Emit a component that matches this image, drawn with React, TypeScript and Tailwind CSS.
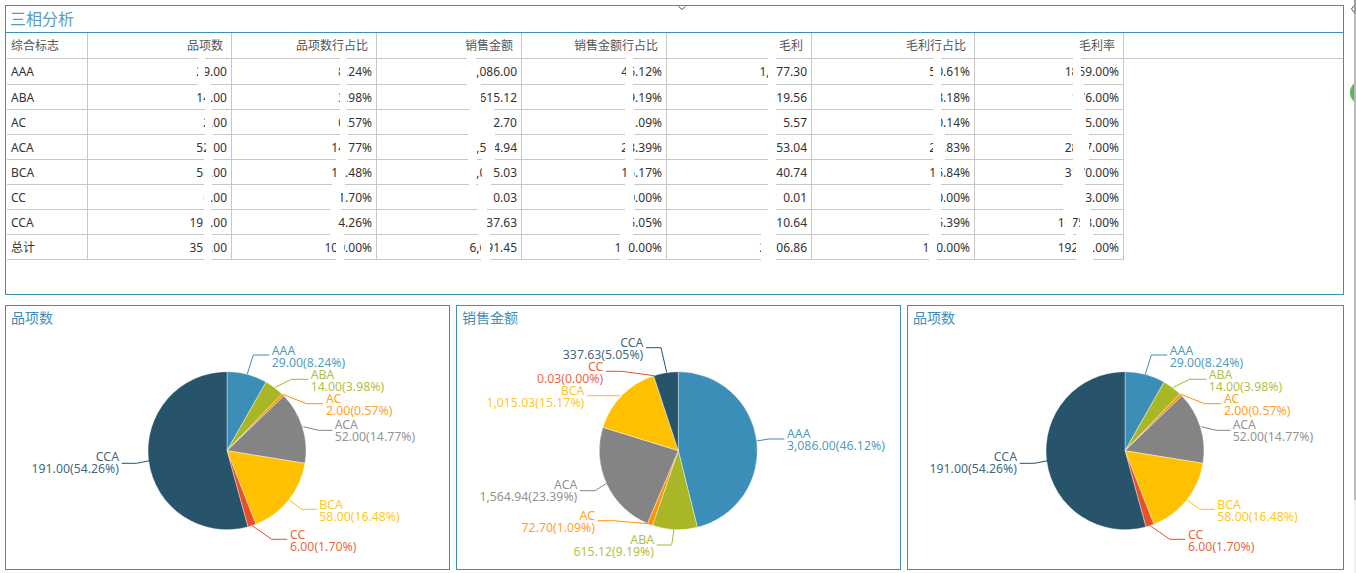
const COLORS = {
  AAA: '#3b8eb7',
  ABA: '#a9b726',
  AC: '#ff9300',
  ACA: '#848484',
  BCA: '#ffc000',
  CC: '#e8502a',
  CCA: '#27536b',
};

type Label = {
  name: string;
  value: string;
  color: string;
  pct: number;
  line: string;
  x: number;
  y: number;
  anchor: 'start' | 'end';
};

const ROWS = [
  {
    name: 'AAA',
    cells: ['29.00', '8.24%', '3,086.00', '46.12%', '1,377.30', '50.61%', '1859.00%'],
    strips: [[197.5, 204.5], [340, 347], [467, 476], [625.7, 632.7], [767.7, 776], [933.3, 940.7], [1072.7, 1081]],
  },
  {
    name: 'ABA',
    cells: ['14.00', '3.98%', '615.12', '9.19%', '219.56', '8.18%', '176.00%'],
    strips: [[204.5, 211], [339.5, 347], [469, 480.5], [625, 632.7], [767.7, 776], [933.3, 940.7], [1073.3, 1084]],
  },
  {
    name: 'AC',
    cells: ['2.00', '0.57%', '72.70', '1.09%', '5.57', '0.14%', '5.00%'],
    strips: [[204.5, 211.5], [340, 347.3], [475, 494], [625, 634], [767.7, 776], [933.3, 940.7], [1071.7, 1085]],
  },
  {
    name: 'ACA',
    cells: ['52.00', '14.77%', '1,564.94', '23.39%', '553.04', '21.83%', '2847.00%'],
    strips: [[205.7, 213], [340, 347.7], [468, 477], [486, 495], [625, 633.3], [767.7, 776], [933.3, 945], [1073.3, 1089]],
  },
  {
    name: 'BCA',
    cells: ['58.00', '16.48%', '1,015.03', '15.17%', '440.74', '15.84%', '3170.00%'],
    strips: [[203.5, 212], [335.5, 344.5], [469, 476], [482.3, 491], [625.7, 634], [767.7, 776], [934.3, 940.7], [1073, 1083.5]],
  },
  {
    name: 'CC',
    cells: ['6.00', '1.70%', '0.03', '0.00%', '0.01', '0.00%', '3.00%'],
    strips: [[203.5, 210.7], [332.3, 341], [478, 486.7], [625, 634], [767.7, 776], [931, 940.7], [1063, 1085]],
  },
  {
    name: 'CCA',
    cells: ['191.00', '54.26%', '337.63', '5.05%', '110.64', '5.39%', '10753.00%'],
    strips: [[203.5, 210.7], [330, 337.7], [478, 486.7], [625, 632.7], [767.7, 776], [931, 940.7], [1065, 1072.7], [1080, 1090]],
  },
  {
    name: '总计',
    cells: ['352.00', '100.00%', '6,691.45', '100.00%', '2,706.86', '100.00%', '19240.00%'],
    strips: [[203.5, 212], [336, 344], [481, 490], [620, 627.7], [761, 776], [929, 936.7], [1076, 1093]],
  },
];

const HEADERS = ['品项数', '品项数行占比', '销售金额', '销售金额行占比', '毛利', '毛利行占比', '毛利率'];

const ITEM_LABELS: Label[] = [
  { name: 'AAA', value: '29.00(8.24%)', color: COLORS.AAA, pct: 8.24, line: '247.3,374 253.3,355 269.3,355', x: 271.7, y: 350.7, anchor: 'start' },
  { name: 'ABA', value: '14.00(3.98%)', color: COLORS.ABA, pct: 3.98, line: '275,387.3 291.7,379.3 308.3,379.3', x: 310.7, y: 375, anchor: 'start' },
  { name: 'AC', value: '2.00(0.57%)', color: COLORS.AC, pct: 0.57, line: '282.7,394.3 306.7,403.7 323.3,403.7', x: 326, y: 399, anchor: 'start' },
  { name: 'ACA', value: '52.00(14.77%)', color: COLORS.ACA, pct: 14.77, line: '303.3,426.7 318.3,430.3 332.3,430.3', x: 334.7, y: 425, anchor: 'start' },
  { name: 'BCA', value: '58.00(16.48%)', color: COLORS.BCA, pct: 16.48, line: '289.3,500 301.7,509.3 316.7,509.3', x: 319.3, y: 504.7, anchor: 'start' },
  { name: 'CC', value: '6.00(1.70%)', color: COLORS.CC, pct: 1.7, line: '252.3,525.7 271.7,539.3 287.3,539.3', x: 290, y: 534.7, anchor: 'start' },
  { name: 'CCA', value: '191.00(54.26%)', color: COLORS.CCA, pct: 54.26, line: '149.3,460.7 136.7,463.3 121.7,463.3', x: 119, y: 457.3, anchor: 'end' },
];

const SALES_LABELS: Label[] = [
  { name: 'AAA', value: '3,086.00(46.12%)', color: COLORS.AAA, pct: 46.12, line: '756.7,441 769,439 784.3,439', x: 787, y: 433.7, anchor: 'start' },
  { name: 'ABA', value: '615.12(9.19%)', color: COLORS.ABA, pct: 9.19, line: '674,529.3 671.7,545 656.7,545', x: 654, y: 539.7, anchor: 'end' },
  { name: 'AC', value: '72.70(1.09%)', color: COLORS.AC, pct: 1.09, line: '651.7,524 613.3,520.7 597.7,520.7', x: 595, y: 515.7, anchor: 'end' },
  { name: 'ACA', value: '1,564.94(23.39%)', color: COLORS.ACA, pct: 23.39, line: '606.7,483.3 595,490.7 580,490.7', x: 577.3, y: 484.7, anchor: 'end' },
  { name: 'BCA', value: '1,015.03(15.17%)', color: COLORS.BCA, pct: 15.17, line: '620,395.7 603,395.7 587.3,395.7', x: 584.3, y: 390.7, anchor: 'end' },
  { name: 'CC', value: '0.03(0.00%)', color: COLORS.CC, pct: 0, line: '654,375.7 621.7,371.3 606,371.3', x: 603.3, y: 366.7, anchor: 'end' },
  { name: 'CCA', value: '337.63(5.05%)', color: COLORS.CCA, pct: 5.05, line: '666.7,372.3 661,347.7 646,347.7', x: 643.3, y: 342.7, anchor: 'end' },
];

function slicePath(cx: number, cy: number, r: number, from: number, to: number) {
  const a0 = (from / 100) * Math.PI * 2;
  const a1 = (to / 100) * Math.PI * 2;
  const x0 = cx + r * Math.sin(a0);
  const y0 = cy - r * Math.cos(a0);
  const x1 = cx + r * Math.sin(a1);
  const y1 = cy - r * Math.cos(a1);
  const large = to - from > 50 ? 1 : 0;
  return `M${cx} ${cy}L${x0} ${y0}A${r} ${r} 0 ${large} 1 ${x1} ${y1}Z`;
}

function Pie({ labels, cx, viewBox }: { labels: Label[]; cx: number; viewBox: string }) {
  const total = labels.reduce((sum, l) => sum + l.pct, 0);
  let acc = 0;
  return (
    <svg viewBox={viewBox} className="block w-full h-[239px]">
      {labels.map((l) => {
        if (l.pct === 0) return null;
        const from = (acc / total) * 100;
        acc += l.pct;
        const to = (acc / total) * 100;
        return <path key={l.name} d={slicePath(cx, 450.7, 79, from, to)} fill={l.color} stroke="#ffffff" strokeWidth="0.4" />;
      })}
      {labels.map((l) => (
        <g key={l.name} fill={l.color} fontSize="12.3" textAnchor={l.anchor}>
          <polyline points={l.line} fill="none" stroke={l.color} strokeWidth="1" />
          <text x={l.x} y={l.y + 4} fillOpacity="0.9">{l.name}</text>
          <text x={l.x} y={l.y + 16} fillOpacity="0.9">{l.value}</text>
        </g>
      ))}
    </svg>
  );
}

function ChartPanel({ title, className, children }: { title: string; className: string; children: React.ReactNode }) {
  return (
    <div className={`h-[265px] border border-[#3c8fb8] ${className}`}>
      <div className="h-[24px] pl-[5px] text-sm leading-[24px] text-[#3c8fb8]">{title}</div>
      {children}
    </div>
  );
}

export default function App() {
  return (
    <div className="relative h-[573px] overflow-hidden bg-white pl-[5px] pt-[5px] font-['Noto_Sans','Noto_Sans_CJK_SC',sans-serif]">
      <div className="h-[290px] w-[1339px] border border-[#3c8fb8]">
        <div className="h-[27px] border-b border-[#3c8fb8] pl-1 text-base leading-[26px] text-[#5b9bbd]">三相分析</div>

        <div className="ml-px border-b border-[#c8c8c8]">
          <div className="grid h-[25px] grid-cols-[81px_144px_145px_145px_145px_145px_163px_149px] text-xs text-[#555555]">
            <div className="flex items-center border-r border-[#c8c8c8] pl-1">综合标志</div>
            {HEADERS.map((h) => (
              <div key={h} className="flex items-center justify-end border-r border-[#c8c8c8] pr-2">{h}</div>
            ))}
          </div>
        </div>

        {ROWS.map((row, i) => (
          <div
            key={row.name}
            className={`relative ml-px grid w-[1117px] grid-cols-[81px_144px_145px_145px_145px_145px_163px_149px] border-b border-[#c8c8c8] text-xs text-[#333333] ${i === 0 ? 'h-[26px]' : 'h-[25px]'}`}
          >
            <div className={`flex items-center border-r border-[#c8c8c8] pl-1 ${i === 0 ? '' : 'pt-[2px]'}`}>{row.name}</div>
            {row.cells.map((c, j) => (
              <div key={j} className={`flex items-center justify-end border-r border-[#c8c8c8] pr-1 ${i === 0 ? '' : 'pt-[2px]'}`}>{c}</div>
            ))}
            {row.strips.map(([x0, x1]) => (
              <span
                key={x0}
                className="absolute top-[-1px] bottom-[-1px] bg-white"
                style={{ left: x0 - 7, width: x1 - x0 }}
              />
            ))}
          </div>
        ))}
      </div>

      <div className="mt-[10px] flex gap-[6px]">
        <ChartPanel title="品项数" className="w-[445px]">
          <Pie labels={ITEM_LABELS} cx={227} viewBox="6 330 443 239" />
        </ChartPanel>
        <ChartPanel title="销售金额" className="w-[445px]">
          <Pie labels={SALES_LABELS} cx={678.3} viewBox="457 330 443 239" />
        </ChartPanel>
        <ChartPanel title="品项数" className="w-[437px]">
          <Pie labels={ITEM_LABELS} cx={227} viewBox="10 330 435 239" />
        </ChartPanel>
      </div>

      {/* collapse arrow on the top border */}
      <svg viewBox="0 0 8 4" className="absolute left-[678px] top-[6px] h-[4px] w-[8px]">
        <polyline points="0.5,0.5 4,3.5 7.5,0.5" fill="none" stroke="#555555" strokeWidth="1" />
      </svg>

      {/* right edge: side toggle, green handle, scrollbar */}
      <svg viewBox="0 0 3 8" className="absolute left-[1351px] top-[5px] h-[8px] w-[3px]">
        <polyline points="3,0.5 0.5,4 3,7.5" fill="none" stroke="#555555" strokeWidth="1" />
      </svg>
      <div className="absolute left-[1350px] top-[80px] h-[25px] w-[4px] overflow-hidden">
        <div className="h-[25px] w-[25px] rounded-full bg-[#5cb85c]" />
      </div>
      <div className="absolute right-0 top-0 flex h-[573px] w-[2px] flex-col">
        <div className="h-[14px] bg-[#9a9a9a]" />
        <div className="h-[486px] bg-[#bbbbbb]" />
        <div className="flex-1 bg-[#f0f0f0]" />
      </div>
    </div>
  );
}
